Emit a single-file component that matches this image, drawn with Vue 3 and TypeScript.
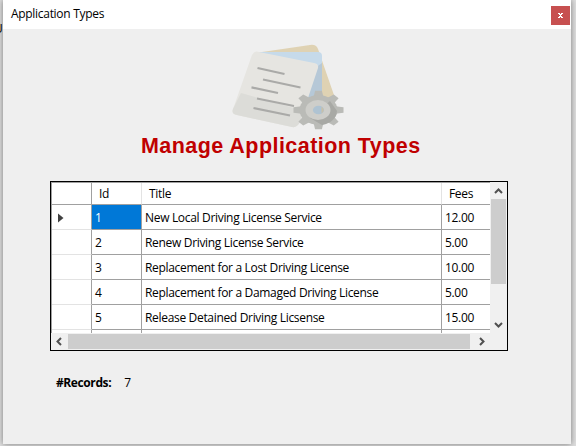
<script setup lang="ts">
interface ApplicationType {
  id: number
  title: string
  fees: string
}

const types: ApplicationType[] = [
  { id: 1, title: 'New Local Driving License Service', fees: '12.00' },
  { id: 2, title: 'Renew Driving License Service', fees: '5.00' },
  { id: 3, title: 'Replacement for a Lost Driving License', fees: '10.00' },
  { id: 4, title: 'Replacement for a Damaged Driving License', fees: '5.00' },
  { id: 5, title: 'Release Detained Driving Licsense', fees: '15.00' },
]
const recordCount = 7
const teeth = [0, 45, 90, 135, 180, 225, 270, 315]
</script>

<template>
  <div class="desktop">
    <span class="behind">U</span>
    <main class="window">
      <header class="titlebar">
        <span class="caption">Application Types</span>
        <button class="close" aria-label="Close">
          <svg width="19" height="19" viewBox="0 0 19 19" shape-rendering="crispEdges">
            <path d="M7 7h2v1h1v-1h2v1h-1v1h-1v1h1v1h1v1h-2v-1h-1v1h-2v-1h1v-1h1v-1h-1v-1h-1z" fill="#fff" />
          </svg>
        </button>
      </header>

      <section class="content">
        <svg class="picture" width="136" height="100" viewBox="0 0 136 100">
          <path d="M42 16 L90 9 Q96 8 98 13 L115 62 Q116 68 110 70 L70 80Z" fill="#dfd2b3" />
          <path d="M38 16 H98 Q102 16 102 20 V70 H70Z" fill="#c6daea" />
          <path d="M98 30 L102 27 V70 H84Z" fill="#b6c8d7" />
          <path d="M39 16 Q35 14 32 19 L13 73 Q11 78 17 79 L72 91 Q77 92 80 86 L98 32 Q99 28 94 27Z" fill="#e6e5e1" />
          <path d="M21 57 L13 73 Q11 78 17 79 L72 91 Q77 92 80 86 L84 75Z" fill="#dcdcd8" />
          <path d="M37.500 32 L64.500 38 M43 43.500 L80.500 51.500 M31.500 51.300 L58 57 M37 62.500 L74 70 M33.500 72 L70 79.500" stroke="#aaaaa8" stroke-width="2.200" fill="none" />
          <g fill="#babbb7">
            <path v-for="a in teeth" :key="a" d="M-4 -14 L-2.800 -20.500 H2.800 L4 -14Z" :transform="`translate(98.500 74) scale(1.220 .94) rotate(${a})`" />
            <ellipse cx="98.500" cy="74" rx="19" ry="15" />
          </g>
          <path d="M110 65 L117 75 Q116 86 102 89 L90 82Z" fill="#a8a9a5" />
          <ellipse cx="98" cy="74" rx="12.500" ry="10" fill="#cececa" />
          <ellipse cx="98.500" cy="74" rx="5.600" ry="4.300" fill="#afc3d2" />
          <path d="M101.500 70.500 Q106 74 101.500 77.500Z" fill="#c9c0a8" />
        </svg>

        <h1 class="heading">Manage Application Types</h1>

        <div class="grid">
          <div class="view">
            <div class="row head">
              <span class="cell marker"></span>
              <span class="cell">Id</span>
              <span class="cell">Title</span>
              <span class="cell">Fees</span>
            </div>
            <div v-for="(t, i) in types" :key="t.id" class="row">
              <span class="cell marker">
                <svg v-if="i === 0" width="6" height="10" viewBox="0 0 6 10"><path d="M0 0.500 L5.500 5 L0 9.500Z" fill="#404040" /></svg>
              </span>
              <span class="cell" :class="{ selected: i === 0 }">{{ t.id }}</span>
              <span class="cell">{{ t.title }}</span>
              <span class="cell">{{ t.fees }}</span>
            </div>
            <div class="row">
              <span class="cell marker"></span>
              <span class="cell"></span>
              <span class="cell"></span>
              <span class="cell"></span>
            </div>
          </div>
          <div class="vscroll">
            <svg width="16" height="17" viewBox="0 0 16 17"><path d="M4 11 L7.500 7.500 L11 11" /></svg>
            <div class="vthumb"></div>
            <svg class="end" width="16" height="17" viewBox="0 0 16 17"><path d="M4 6 L7.500 9.500 L11 6" /></svg>
          </div>
          <div class="hscroll">
            <svg width="17" height="16" viewBox="0 0 17 16"><path d="M10 4 L6.500 7.500 L10 11" /></svg>
            <div class="hthumb"></div>
            <svg class="end" width="17" height="16" viewBox="0 0 17 16"><path d="M6 4 L9.500 7.500 L6 11" /></svg>
          </div>
        </div>

        <footer class="records">
          <b>#Records:</b>
          <span>{{ recordCount }}</span>
        </footer>
      </section>
    </main>
  </div>
</template>

<style>
body {
  overflow: hidden;
}
</style>

<style scoped>
.desktop {
  position: relative;
  box-sizing: border-box;
  width: 576px;
  height: 446px;
  padding-left: 3px;
  overflow: hidden;
  background: #dedede;
  color: #000;
  font: 12px/16px "Open Sans", "Noto Sans", sans-serif;
}
.behind {
  position: absolute;
  left: -6px;
  top: 21px;
}
.window {
  position: relative;
  width: 568px;
  height: 444px;
  background: #efefef;
  box-shadow: 0 0 6px rgba(0, 0, 0, 0.45);
}
.titlebar {
  display: flex;
  justify-content: space-between;
  box-sizing: border-box;
  height: 29px;
  padding: 6px 1px 0 8px;
  background: #fff;
}
.caption {
  letter-spacing: -0.3px;
}
.close {
  width: 19px;
  height: 19px;
  padding: 0;
  border: 0;
  background: #c75050;
}
.close svg {
  display: block;
}
.content {
  display: flex;
  flex-direction: column;
  padding: 7px 0 0 47px;
}
.picture {
  margin-left: 170px;
}
.heading {
  margin: -3px 0 0 91px;
  font: bold 21.5px/26px "Liberation Sans", Arial, sans-serif;
  letter-spacing: 0.45px;
  color: #c00000;
  white-space: nowrap;
}
.grid {
  display: grid;
  grid-template-columns: 440px 16px;
  grid-template-rows: 152px 16px;
  width: 456px;
  height: 168px;
  margin-top: 22px;
  border: 1px solid #000;
  background: #f0f0f0;
}
.view {
  box-sizing: border-box;
  width: 439px;
  height: 151px;
  overflow: hidden;
  border-top: 1px solid #a0a0a0;
  border-left: 1px solid #a0a0a0;
  background: #fff;
}
.row {
  display: grid;
  grid-template-columns: 40px 50px 300px 48px;
  height: 25px;
}
.cell {
  display: flex;
  align-items: center;
  box-sizing: border-box;
  padding: 2px 0 0 3px;
  border-right: 1px solid #a0a0a0;
  border-bottom: 1px solid #a0a0a0;
  white-space: nowrap;
  letter-spacing: -0.32px;
}
.cell:last-child {
  border-right: 0;
}
.marker {
  padding-left: 6px;
  border-bottom-color: #e3e3e3;
}
.head {
  height: 22px;
}
.head .cell {
  padding: 1px 0 0 7px;
  border-right-color: #e3e3e3;
  border-bottom-color: #a0a0a0;
}
.head .marker {
  border-right-color: #a0a0a0;
}
.selected {
  background: #0078d7;
  color: #fff;
}
.vscroll,
.hscroll {
  display: flex;
}
.vscroll {
  flex-direction: column;
}
.vscroll svg,
.hscroll svg {
  flex: none;
  fill: none;
  stroke: #505050;
  stroke-width: 2;
}
.end {
  margin-top: auto;
}
.hscroll .end {
  margin-top: 0;
  margin-left: auto;
  margin-right: 16px;
}
.vthumb {
  width: 15px;
  height: 85px;
  background: #cdcdcd;
}
.hscroll {
  grid-column: 1 / 3;
}
.hthumb {
  width: 402px;
  height: 15px;
  background: #cdcdcd;
}
.records {
  display: flex;
  gap: 13px;
  margin: 24px 0 0 6px;
}
.records b {
  letter-spacing: -0.4px;
}
</style>
